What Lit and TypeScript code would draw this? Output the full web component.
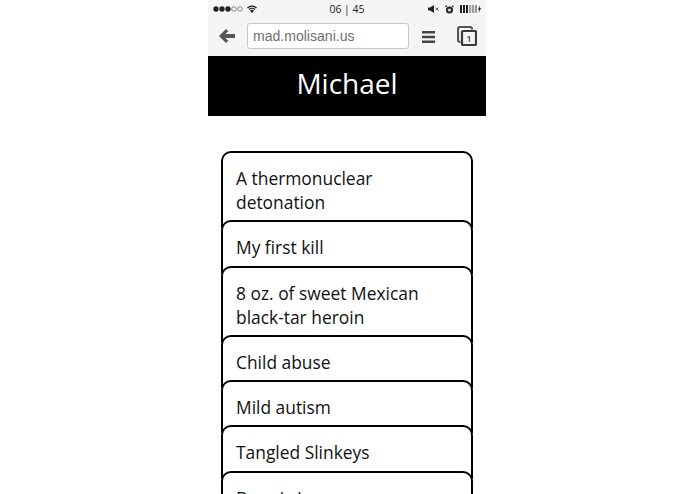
import { LitElement, html, css, svg } from "lit";
import { customElement } from "lit/decorators.js";

const items = [
  "A thermonuclear detonation",
  "My first kill",
  "8 oz. of sweet Mexican black-tar heroin",
  "Child abuse",
  "Mild autism",
  "Tangled Slinkeys",
  "Dennis L",
];

@customElement("app-root")
export class AppRoot extends LitElement {
  static styles = css`
    :host { display: block; height: 494px; overflow: hidden; background: #fff; font-family: "Open Sans", sans-serif; }
    .phone { width: 278px; height: 494px; margin-left: 208px; overflow: hidden; display: flex; flex-direction: column; }
    .status { height: 18px; flex: none; box-sizing: border-box; background: #f5f5f5; display: grid; grid-template-columns: 1fr auto 1fr; align-items: center; padding: 0 5px 0 5px; color: #222; font-size: 10.5px; }
    .status .l, .status .r { display: flex; align-items: center; }
    .status .l { gap: 4px; }
    .status .r { justify-content: flex-end; gap: 6px; }
    .bar { height: 38px; flex: none; background: #f5f5f5; display: flex; align-items: flex-start; padding-left: 11px; box-sizing: border-box; }
    .back { margin-top: 11px; flex: none; }
    .url { width: 162px; height: 26px; margin: 5px 0 0 12px; box-sizing: border-box; border: 1px solid #c8c8c8; border-radius: 3px; background: #fff; color: #707070; font-family: "Liberation Sans", sans-serif; font-size: 14.05px; line-height: 25px; padding-left: 5px; flex: none; }
    .menu { margin: 13px 0 0 13px; flex: none; }
    .tabs { margin: 8px 0 0 22px; flex: none; }
    h1 { margin: 0; flex: none; height: 60px; background: #000; color: #fff; font-weight: 400; font-size: 28px; line-height: 55px; text-align: center; }
    ul { list-style: none; margin: 35px 13px 0; padding: 0; }
    li { border: 2px solid #000; border-bottom: 0; border-radius: 10px 10px 0 0; margin-bottom: -8px; padding: 13px 13px 14.3px; background: #fff; font-size: 17.4px; line-height: 24px; color: #111; }
  `;

  render() {
    return html`
      <div class="phone">
        <div class="status">
          <div class="l">
            <svg width="30" height="6" viewBox="0 0 30 6">
              ${[3, 9, 15].map((x) => svg`<circle cx=${x} cy="3" r="2.7" fill="#222"/>`)}
              ${[21, 27].map((x) => svg`<circle cx=${x} cy="3" r="2.3" fill="none" stroke="#444" stroke-width=".6"/>`)}
            </svg>
            <svg width="10" height="8" viewBox="0 0 10 8">
              <path d="M.5 3a6.500 6.500 0 0 1 9 0M2 4.500a4.300 4.300 0 0 1 6 0" fill="none" stroke="#222" stroke-width="1.300"/>
              <path d="M3 5.800a2.500 2.500 0 0 1 4 0L5 8z" fill="#222"/>
            </svg>
          </div>
          <div class="time">06 | 45</div>
          <div class="r">
            <svg width="11" height="8" viewBox="0 0 11 8">
              <path d="M0 2.500h2L6 0v8L2 5.500H0z" fill="#222"/>
              <path d="M7.500 2.500l3 3m0-3l-3 3" stroke="#444" stroke-width=".8"/>
            </svg>
            <svg width="9" height="9" viewBox="0 0 9 9">
              <circle cx="4.500" cy="5" r="3.500" fill="#222"/>
              <circle cx="4.500" cy="5" r="1.600" fill="#ddd"/>
              <path d="M.5 2L2 .7M8.500 2L7 .7" stroke="#222" stroke-width="1.300"/>
            </svg>
            <svg width="21" height="8" viewBox="0 0 21 8">
              <path d="M0 0h2v8H0zM3 0h2v8H3zM6 0h2v8H6z" fill="#222"/>
              <path d="M9.500.5h1.200v7H9.500zM12.500.5h1.200v7h-1.200zM15.500.5h1v7h-1z" fill="none" stroke="#555" stroke-width=".6"/>
              <path d="M20 0l-2 4.500h1.200L18.700 8l2.300-5h-1.300z" fill="#222"/>
            </svg>
          </div>
        </div>
        <div class="bar">
          <svg class="back" width="16" height="14" viewBox="0 0 16 14">
            <path d="M0 7L7 0l2.300 2.300L6.300 5H16v4H6.300l3 2.700L7 14z" fill="#555"/>
          </svg>
          <div class="url">mad.molisani.us</div>
          <svg class="menu" width="13" height="12" viewBox="0 0 13 12">
            <path d="M0 0h13v2.600H0zM0 4.700h13v2.600H0zM0 9.400h13V12H0z" fill="#444"/>
          </svg>
          <svg class="tabs" width="20" height="20" viewBox="0 0 20 20">
            <path d="M3.500 16H3A2 2 0 0 1 1 14V3A2 2 0 0 1 3 1H13A2 2 0 0 1 15 3V3.500" fill="none" stroke="#555" stroke-width="2.200"/>
            <rect x="5" y="5" width="14" height="14" rx="1" fill="#f5f5f5" stroke="#3a3a3a" stroke-width="2.200"/>
            <text x="12" y="16" text-anchor="middle" font-size="9.500" font-weight="600" fill="#444" font-family="Open Sans, sans-serif">1</text>
          </svg>
        </div>
        <h1>Michael</h1>
        <ul>${items.map((t) => html`<li>${t}</li>`)}</ul>
      </div>
    `;
  }
}
